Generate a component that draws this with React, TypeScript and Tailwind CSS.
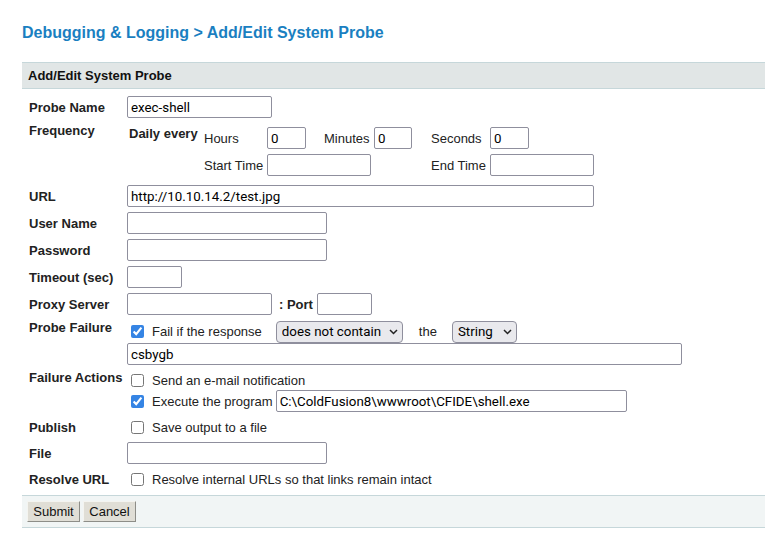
import React from "react";

const inputCls =
  "h-[22px] border border-[#8f8f9d] rounded-[2px] px-[3px] bg-white font-['Roboto',sans-serif] text-[13.33px] text-black outline-none";

const Field = ({ w, value = "" }: { w: string; value?: string }) => (
  <input type="text" defaultValue={value} className={`${inputCls} ${w}`} />
);

const Check = ({ checked = false, label }: { checked?: boolean; label: string }) => (
  <>
    <input
      type="checkbox"
      defaultChecked={checked}
      className="m-[3px_8px_3px_4px] w-[13px] h-[13px] accent-[#3584e4] shrink-0"
    />
    <span className="whitespace-nowrap">{label}</span>
  </>
);

const Select = ({ w, value }: { w: string; value: string }) => (
  <div className={`relative h-[22px] ${w}`}>
    <select
      defaultValue={value}
      className="appearance-none w-full h-full border border-[#8f8f9d] rounded-[4px] bg-[#e9e9ed] pl-[5px] font-['Roboto',sans-serif] text-[13.33px] text-black outline-none"
    >
      <option>{value}</option>
    </select>
    <svg
      className="pointer-events-none absolute right-[5px] top-[8px]"
      width="9"
      height="6"
      viewBox="0 0 9 6"
    >
      <path d="M1 1l3.5 3.5L8 1" fill="none" stroke="#222" strokeWidth="1.5" />
    </svg>
  </div>
);

const Label = ({ children, top = false }: { children: React.ReactNode; top?: boolean }) => (
  <div className={`pl-[7px] font-bold leading-[15px] whitespace-nowrap ${top ? "self-start" : "self-center"}`}>
    {children}
  </div>
);

export default function App() {
  return (
    <div className="w-[765px] h-[554px] overflow-hidden bg-white font-['Liberation_Sans',Arial,sans-serif] text-[13px] text-[#222]">
      <h1 className="pt-[24px] pl-[22px] text-[16px] leading-[18px] font-bold text-[#1a7fc1]">
        Debugging &amp; Logging &gt; Add/Edit System Probe
      </h1>

      <div className="mt-[20px] ml-[22px] h-[27px] border-y border-[#c6d7da] bg-[#e1e6e6] flex items-center pl-[6px] font-bold text-[#111]">
        Add/Edit System Probe
      </div>

      <div className="mt-[7px] ml-[22px] grid grid-cols-[105px_1fr] gap-y-[5px] leading-[15px]">
        <Label>Probe Name</Label>
        <div>
          <Field w="w-[145px]" value="exec-shell" />
        </div>

        <Label top>Frequency</Label>
        <div className="flex items-start pt-[4px] pb-[4px]">
          <span className="w-[77px] pl-[2px] font-bold mt-[-1px]">Daily every</span>
          <div className="grid grid-cols-[63px_57px_50px_57px_59px_auto] gap-y-[5px] items-center">
            <span>Hours</span>
            <Field w="w-[39px]" value="0" />
            <span>Minutes</span>
            <Field w="w-[38px]" value="0" />
            <span>Seconds</span>
            <Field w="w-[39px]" value="0" />
            <span>Start Time</span>
            <div className="col-span-3">
              <Field w="w-[104px]" />
            </div>
            <span>End Time</span>
            <Field w="w-[104px]" />
          </div>
        </div>

        <Label>URL</Label>
        <div>
          <Field w="w-[467px]" value="http://10.10.14.2/test.jpg" />
        </div>

        <Label>User Name</Label>
        <div>
          <Field w="w-[200px]" />
        </div>

        <Label>Password</Label>
        <div>
          <Field w="w-[200px]" />
        </div>

        <Label>Timeout (sec)</Label>
        <div>
          <Field w="w-[55px]" />
        </div>

        <Label>Proxy Server</Label>
        <div className="flex items-center">
          <Field w="w-[145px]" />
          <span className="ml-[7px] font-bold">: Port</span>
          <span className="ml-[4px]">
            <Field w="w-[55px]" />
          </span>
        </div>

        <Label top>Probe Failure</Label>
        <div className="flex flex-col">
          <div className="flex items-center h-[23px]">
            <Check checked label="Fail if the response" />
            <Select w="ml-[14px] w-[127px]" value="does not contain" />
            <span className="ml-[16px]">the</span>
            <Select w="ml-[15px] w-[65px]" value="String" />
          </div>
          <Field w="w-[555px]" value="csbygb" />
        </div>

        <Label top>Failure Actions</Label>
        <div className="flex flex-col">
          <div className="flex items-center h-[20px]">
            <Check label="Send an e-mail notification" />
          </div>
          <div className="flex items-center h-[22px]">
            <Check checked label="Execute the program" />
            <span className="ml-[3px]">
              <Field w="w-[351px]" value="C:\ColdFusion8\wwwroot\CFIDE\shell.exe" />
            </span>
          </div>
        </div>

        <Label>Publish</Label>
        <div className="flex items-center h-[20px]">
          <Check label="Save output to a file" />
        </div>

        <Label>File</Label>
        <div>
          <Field w="w-[200px]" />
        </div>

        <Label>Resolve URL</Label>
        <div className="flex items-center h-[20px]">
          <Check label="Resolve internal URLs so that links remain intact" />
        </div>
      </div>

      <div className="mt-[6px] ml-[22px] h-[33px] border-y border-[#c6d7da] bg-[#f1f5f5] flex items-start pt-[5px] pl-[5px] gap-[3px]">
        <button className="h-[21px] w-[53px] bg-[#e0ded6] border border-t-[#f4f4f0] border-l-[#f4f4f0] border-r-[#8d8d88] border-b-[#8d8d88] text-[13px] text-[#111] leading-none">
          Submit
        </button>
        <button className="h-[21px] w-[53px] bg-[#e0ded6] border border-t-[#f4f4f0] border-l-[#f4f4f0] border-r-[#8d8d88] border-b-[#8d8d88] text-[13px] text-[#111] leading-none">
          Cancel
        </button>
      </div>
    </div>
  );
}
